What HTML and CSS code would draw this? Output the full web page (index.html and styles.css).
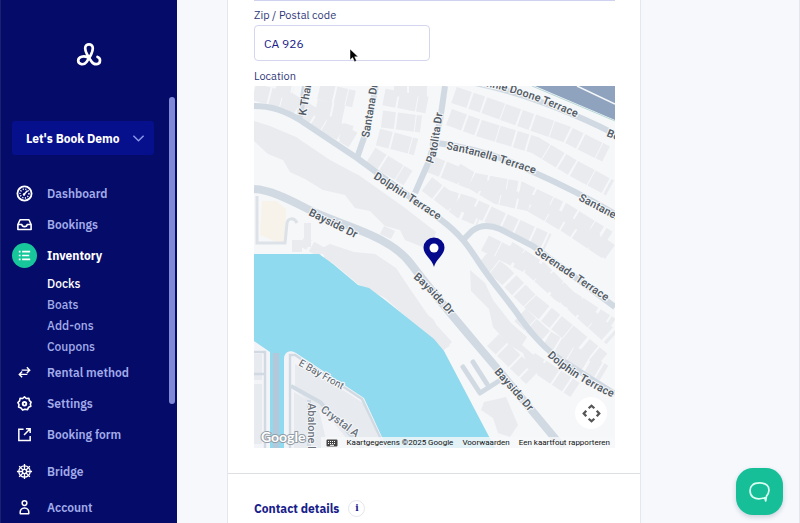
FILE: index.html
```html
<!DOCTYPE html>
<html lang="en">
<head>
<meta charset="utf-8">
<meta name="viewport" content="width=device-width, initial-scale=1">
<title>Let's Book – Docks</title>
<link rel="stylesheet" href="styles.css">
</head>
<body>
<div class="app">
  <aside class="sidebar">
    <svg class="logo" viewBox="0 0 26 26" fill="none" stroke="#fff" stroke-width="2.700" stroke-linecap="round" aria-hidden="true"><path d="M11.500 15.300C8 13.500 2.200 14.500 2.200 18.600 2.200 22.800 8 23.500 10.500 20 13 16.500 16.800 10 16.800 6.200 16.800 1 9.200 1 9.200 6.200 9.200 10 13 16 15.500 19.500 18 23.500 24 23 24 18.500 24 16.500 23 15.500 21.500 15"/></svg>
    <button class="account-switch" type="button"><span>Let's Book Demo</span>
      <svg viewBox="0 0 14 9" fill="none" stroke="#8c97e6" stroke-width="1.600"><path d="M1.500 1.500 7 7l5.500-5.500"/></svg></button>
    <nav class="nav">
      <a class="item" href="#"><span class="icon"><svg viewBox="0 0 18 18" fill="none" stroke="#fff"><circle cx="9" cy="9" r="7.500" stroke-width="1.900"/><circle cx="9" cy="9" r="4.700" stroke-width="1.600" stroke-dasharray="1.200 1.600"/><path d="m8 10.500 4-4.500" stroke-width="1.600"/><circle cx="8.500" cy="10" r="1.300" fill="#fff" stroke="none"/></svg></span>Dashboard</a>
      <a class="item" href="#"><span class="icon"><svg viewBox="0 0 18 18" fill="none" stroke="#fff" stroke-width="1.700" stroke-linejoin="round"><path d="M2 9 4.300 4h9.400l2.300 5v5.300H2zM2 9h4.200c.2 3 5.400 3 5.600 0H16"/></svg></span>Bookings</a>
      <a class="item current" href="#"><span class="icon active"><svg viewBox="0 0 18 18" fill="none" stroke="#fff" stroke-width="1.800"><path d="M6.500 5H15M6.500 9H14M6.500 13H15M3 5h1.800M3 9h1.800M3 13h1.800"/></svg></span>Inventory</a>
      <div class="sub">
        <a class="current" href="#">Docks</a>
        <a href="#">Boats</a>
        <a href="#">Add-ons</a>
        <a href="#">Coupons</a>
      </div>
      <a class="item" href="#"><span class="icon"><svg viewBox="0 0 18 18" fill="none" stroke="#fff" stroke-width="1.500"><path d="M6 6.500h8M11.500 3.500l3 3-3 3M12 11H4M6.500 8l-3 3 3 3"/></svg></span>Rental method</a>
      <a class="item" href="#"><span class="icon"><svg viewBox="0 0 18 18" fill="none" stroke="#fff"><path stroke-width="1.700" stroke-linejoin="round" d="M9 2l1.900 1.700 2.700-.3.600 2.600L16 7.500 15.200 9.500l.5 2.500-2.300.9L12.200 15.500 9.500 15 7 16 5.300 13.800 2.700 12.800 3.200 10.200 2 8 3.800 6.200 4.300 3.600 7 3.700z"/><circle cx="9" cy="9.300" r="1.900" stroke-width="2"/></svg></span>Settings</a>
      <a class="item" href="#"><span class="icon"><svg viewBox="0 0 18 18" fill="none" stroke="#fff" stroke-width="1.600"><path d="M8 3.500H3v11.800h12V10.500M10.500 3H15v4.500M15 3l-6.500 6.500"/></svg></span>Booking form</a>
      <a class="item tall first" href="#"><span class="icon"><svg viewBox="0 0 18 18" fill="none" stroke="#fff" stroke-width="1.400"><circle cx="9" cy="9" r="6"/><circle cx="9" cy="9" r="2.200"/><path d="M9 1v5.800M9 11.200V17M1 9h5.800M11.200 9H17M3.300 3.300l4.100 4.100M10.600 10.600l4.100 4.100M14.700 3.300l-4.100 4.100M7.400 10.600l-4.100 4.100"/></svg></span>Bridge</a>
      <a class="item tall" href="#"><span class="icon"><svg viewBox="0 0 18 18" fill="none" stroke="#fff" stroke-width="1.600"><circle cx="9" cy="4.300" r="2.500"/><path stroke-linejoin="round" d="M4.500 15.500c-.5-4 1.500-6 4.500-6s5 2 4.500 6z"/></svg></span>Account</a>
    </nav>
    <span class="scroll-thumb"></span>
  </aside>

  <main class="main">
    <section class="card">
      <form class="fields">
        <div class="field-edge"></div>
        <label for="zip">Zip / Postal code</label>
        <input id="zip" type="text" value="CA 926">
        <span class="label">Location</span>
        <div class="map">
          <svg class="map-art" viewBox="254 86 361 362" role="img" aria-label="Location map">
            <rect x="254" y="86" width="361" height="362" fill="#f6f7f9"/>
            <g fill="#e9ebef">
              <path d="M254 121 270 126 296 137 330 160 360 176 405 208 436 232 430 250 405 240 400 230 385 226 370 211 355 208 345 195 323 190 305 179 290 172 283 160 268 154 254 141z"/>
              <path d="M318 250 330 244 354 252 375 254 396 268 410 289 430 318 452 342 444 350 433 341 385 298 358 284 334 264z"/>
              <path d="M384 226l11 5-4 8-11-5zM470 270l15 13 8 17 18 23 16 14-5 8 14 12 12 9-8 9-12-7-5-15-14-8-16-18-4-18-18-18z"/>
              <path d="M296 362 365 403 382 448H292V362zM254 352h12v95h-12z"/>
              <path d="M292 240h10v12h-10zM304 223h7v24h-7zM484 402l22-5 12 28-8 12-12-4-5-15-12-8z"/>
            </g>
            <g fill="none" stroke="#e9ebef" stroke-width="17">
              <path stroke-dasharray="15 2 11 1 18 3" d="M254 92 289 101 320 120 353 140M276 88 293 91M319 91 354 99M316 108 344 114M325 126 351 134"/>
              <path stroke-dasharray="13 2 18 1 10 3" d="M384 97 427 105M382 119 421 124M378 137 416 147M371 155 408 178M394 88h34M427 184 461 210 480 218M430 164 472 181 520 190 563 211 608 239"/>
              <path stroke-dasharray="16 2 12 2 19 1" d="M454 95 484 105 520 118 566 134 606 154M449 117 482 129 535 145 573 168 610 188M456 171 498 196 530 203 566 224 608 252"/>
              <path stroke-dasharray="14 1 18 3 11 2" d="M485 243 530 266 560 293 611 326M483 258 503 274 531 302 557 323 602 360M508 249 540 270 573 303 612 338M520 315 545 338 604 373"/>
              <path stroke-dasharray="12 2 16 2" d="M445 198 469 205 500 220 548 242M586 235 610 252M530 360 575 390M493 340 532 378"/>
              <path stroke-width="11" stroke-dasharray="8 3 12 4" d="M302 241 330 257 366 269 400 299 429 323 445 349M292 377 320 394 360 424"/>
            </g>
            <path fill="#f8f3ea" d="M262 201h14l10 8-1 33-11-1-14-6z"/>
            <path fill="none" stroke="#dce2e8" stroke-width="3" d="M257 196v47h28l2-20c1-5 7-6 10 0"/>
            <path fill="#8fdaee" d="M254 254h65l14 10 25 21 11 3 16 12 49 39 10 12 51 97H254z"/>
            <path fill="#f3f4f7" d="M254 341l16 11v96h-16zM284 448v-89c0-7 6-10 12-6l68 45 23 50z"/>
            <path fill="#e7eaef" d="M254 354h8v26h-8zM254 384h8v60h-8zM295 364l43 23 25 16 20 45h-29l-23-29-36-29zM294 392l24 14 10 42h-34z"/>
            <g fill="none" stroke="#d1dae2">
              <path stroke-width="6" stroke="#b5c8da" d="M276 353v95"/>
              <path stroke-width="2.500" d="M290 448v-93h5l67 44 23 49M254 352h11v96M254 374h10"/>
              <path stroke-width="4" d="M291 386 320 402 363 448M309 400v48"/>
              <path stroke-width="6" stroke-linejoin="round" d="M254 106c18 0 31 5 46 14l57 38 83 61c20 15 27 25 40 45 12 18 28 36 41 55 11 15 25 31 39 40l55 35"/>
              <path stroke-width="6" d="M305 86l-6 34M376 86l-9 43-10 29M445 86l-5 35-11 40-14 32M430 142c35 4 71 14 101 29 27 12 54 25 84 43M464 239l8-8c9-7 18-6 28-2l33 17 82 61M470 82c42 8 89 24 145 52"/>
              <path stroke-width="8" d="M254 189c20 1 43 15 62 24 34 15 75 24 95 51 28 37 57 70 84 102l68 82"/>
              <path stroke-width="5" stroke-linejoin="round" stroke-linecap="round" d="M463 367l17 26 22-14M473 362l14 22"/>
            </g>
            <path fill="#8fa3bf" d="M535 86h80v34z"/>
            <path fill="none" stroke="#f6f8fa" stroke-width="1.500" d="M577 86l38 18"/>
            <path fill="none" stroke="#b7d9d7" d="M532 86l83 35"/>
            <defs>
              <path id="khana" d="M306 116 316 56"/><path id="santana" d="M369 138 380 72"/>
              <path id="patolita" d="M433 164C440 146 439 125 446 98"/>
              <path id="bonnie" d="M480 85C516 92 550 105 599 128"/>
              <path id="bonnie2" d="M606 136l40 16"/>
              <path id="santanella" d="M446 149C478 155 513 166 560 183"/>
              <path id="santanella2" d="M578 200 658 242"/>
              <path id="dolphin" d="M373 178 458 233"/>
              <path id="bayside" d="M308 215 385 253"/>
              <path id="bayside2" d="M413 278C427 289 440 306 467 333"/>
              <path id="serenade" d="M534 253 635 321"/>
              <path id="dolphin2" d="M547 356C564 372 588 388 632 406"/>
              <path id="bayside3" d="M494 372 545 430"/>
              <path id="ebay" d="M298 365 360 400"/>
              <path id="crystal" d="M320 411 383 458"/>
              <path id="abalone" d="M308 403v80"/>
            </defs>
            <g class="streets">
              <text><textPath href="#khana">K Thanga</textPath></text><text><textPath href="#santana">Santana Dr</textPath></text>
              <text><textPath href="#patolita">Patolita Dr</textPath></text><text><textPath href="#bonnie">onnie Doone Terrace</textPath></text>
              <text><textPath href="#bonnie2">Bo</textPath></text><text><textPath href="#santanella">Santanella Terrace</textPath></text>
              <text><textPath href="#santanella2">Santane.</textPath></text><text><textPath href="#dolphin">Dolphin Terrace</textPath></text>
              <text><textPath href="#bayside">Bayside Dr</textPath></text><text><textPath href="#bayside2">Bayside Dr</textPath></text>
              <text><textPath href="#serenade">Serenade Terrace</textPath></text><text><textPath href="#dolphin2">Dolphin Terrace</textPath></text>
              <text><textPath href="#bayside3">Bayside Dr</textPath></text><text class="minor"><textPath href="#ebay">E Bay Front</textPath></text>
              <text class="side"><textPath href="#crystal">Crystal A</textPath></text><text class="side"><textPath href="#abalone">Abalone D</textPath></text>
            </g>
            <path fill="#050a8c" d="M434 267c-2-8-10.500-12-10.500-19.500a10.500 10 0 0 1 21 0C444.500 255 436 259 434 267z"/>
            <circle cx="434" cy="248" r="4.500" fill="#fff"/>
            <text class="brand" x="261" y="442">Google</text>
          </svg>
          <button class="map-move" type="button" aria-label="Move map"><svg viewBox="0 0 20 20" fill="none" stroke="#555" stroke-width="2.400"><path d="M7 4.500 10 1.800l3 2.700M7 15.500l3 2.700 3-2.700M4.500 7 1.800 10l2.700 3M15.500 7l2.700 3-2.700 3"/></svg></button>
          <div class="map-legal">
            <svg class="keys" viewBox="0 0 12 8"><rect x=".5" y=".5" width="11" height="7" rx="1" fill="#444"/><path stroke="#fff" stroke-dasharray="1 1" d="M2 2.500h8M2 4.500h8"/><path stroke="#fff" d="M4 6.300h4"/></svg>
            <span>Kaartgegevens ©2025 Google</span><a href="#">Voorwaarden</a><a href="#">Een kaartfout rapporteren</a>
          </div>
        </div>
      </form>
      <div class="contact"><h2>Contact details</h2><button class="info" type="button">i</button></div>
    </section>
  </main>

  <button class="chat" type="button" aria-label="Open chat"><svg viewBox="0 0 24 24" fill="none" stroke="#d8fff1" stroke-width="1.800" stroke-linejoin="round"><path d="M17.500 18.500C13 20 8 19.800 5 17.800 1.300 15 1.300 8 4.500 5.300c3.300-3 12.200-3 15.300 0 3 2.800 2.600 8.500-.5 11.500l-.8 5z"/></svg></button>
  <svg class="pointer" viewBox="0 0 10 15"><path d="M1 1v11l2.600-2.400 1.900 4.100 2-1-1.800-3.900h3.500z" fill="#050505" stroke="#fff" stroke-width=".5"/></svg>
</div>
</body>
</html>
```
FILE: styles.css
```css
* { box-sizing: border-box; }
body {
  margin: 0;
  font-family: "IBM Plex Sans", "Noto Sans", sans-serif;
  font-size: 12px;
  color: #17208a;
}
button, input { font: inherit; }
a { color: inherit; text-decoration: none; }
.app {
  position: relative;
  display: flex;
  height: 100vh;
  overflow: hidden;
  background: #f6f8fc;
}

/* Sidebar */
.sidebar {
  position: relative;
  flex: 0 0 177px;
  display: flex;
  flex-direction: column;
  padding: 42px 11px 0;
  background: #050b68;
  border-left: 1px solid #18226f;
}
.logo {
  width: 26px;
  height: 26px;
  flex-shrink: 0;
  margin-left: 64px;
}
.account-switch {
  display: flex;
  flex-shrink: 0;
  align-items: center;
  justify-content: space-between;
  height: 34px;
  margin: 53px 12px 23px 0;
  padding: 0 9px 0 14px;
  border: 0;
  border-radius: 3px;
  background: #06108d;
  color: #fff;
  font-weight: 700;
}
.account-switch svg { width: 13px; height: 9px; }
.nav { color: #a2abea; font-weight: 600; }
.item {
  display: flex;
  align-items: center;
  gap: 10px;
  height: 31px;
}
.item.tall { height: 36px; }
.item.first { margin-top: 3px; }
.icon {
  display: grid;
  place-items: center;
  width: 25px;
  height: 25px;
}
.icon svg { width: 17px; height: 17px; }
.icon.active { border-radius: 50%; background: #17c79b; }
.current { color: #fff; }
.item.current { font-weight: 700; }
.sub {
  display: grid;
  margin-top: 2px;
  padding-left: 35px;
  font-weight: 500;
  line-height: 21px;
}
.scroll-thumb {
  position: absolute;
  top: 97px;
  right: 2px;
  width: 6px;
  height: 307px;
  border-radius: 3px;
  background: #7f89d6;
}

/* Form */
.main {
  flex: 1;
  min-width: 0;
  padding: 0 158px 0 50px;
  border-right: 1px solid #e3e6ee;
}
.card {
  min-height: 100vh;
  background: #fff;
  border: solid #e4e6f1;
  border-width: 0 1px;
}
.fields {
  display: flex;
  flex-direction: column;
  align-items: flex-start;
  padding: 0 25px 25px 26px;
  border-bottom: 1px solid #dedfe5;
}
.field-edge { width: 100%; height: 1px; background: #cfd2ee; }
label, .label {
  font-size: 11px;
  line-height: 16px;
  color: #303778;
}
label { margin: 6px 0 2px; }
.label { margin: 7px 0 2px; }
#zip {
  width: 176px;
  height: 36px;
  padding: 0 9px;
  border: 1px solid #d3d6ee;
  border-radius: 4px;
  background: #fff;
  color: #17208a;
}
.contact {
  display: flex;
  align-items: center;
  gap: 9px;
  padding: 26px;
}
h2 { margin: 0; font-size: 12px; line-height: 17px; font-weight: 700; }
.info {
  width: 17px;
  height: 17px;
  padding: 0;
  border: 1px solid #e5e6ee;
  border-radius: 50%;
  background: #fff;
  color: #17208a;
  font: bold 9px/15px "DejaVu Serif", serif;
}

/* Map */
.map {
  position: relative;
  width: 100%;
  overflow: hidden;
  font-family: Roboto, sans-serif;
}
.map-art { display: block; width: 100%; }
.streets {
  font-size: 11px;
  font-weight: 600;
  fill: #555e68;
  stroke: #f7f8fa;
  stroke-width: 2px;
  paint-order: stroke;
}
.streets .minor { font-size: 10px; font-weight: 400; }
.streets .side { font-weight: 500; fill: #6c747e; }
.brand {
  font-family: Lato, sans-serif;
  font-size: 14px;
  font-weight: 700;
  fill: #fff;
  stroke: #939ca5;
  stroke-width: 2px;
  paint-order: stroke;
}
.map-move {
  position: absolute;
  right: 8px;
  bottom: 19px;
  display: grid;
  place-items: center;
  width: 32px;
  height: 32px;
  padding: 0;
  border: 0;
  border-radius: 50%;
  background: #fff;
}
.map-move svg { width: 19px; height: 19px; }
.map-legal {
  position: absolute;
  right: 0;
  bottom: 0;
  display: flex;
  align-items: center;
  gap: 9px;
  height: 11px;
  padding: 0 5px;
  background: rgba(246, 247, 249, 0.8);
  color: #111;
  font-size: 8px;
  line-height: 11px;
  white-space: nowrap;
}
.keys { width: 12px; height: 8px; }

/* Floating items */
.chat {
  position: absolute;
  right: 17px;
  bottom: 8px;
  display: grid;
  place-items: center;
  width: 47px;
  height: 47px;
  padding: 0;
  border: 0;
  border-radius: 17px;
  background: #17bf98;
  box-shadow: 0 2px 5px rgba(20, 50, 80, 0.2);
}
.chat svg { width: 23px; height: 23px; }
.pointer {
  position: absolute;
  left: 349px;
  top: 48px;
  width: 10px;
  height: 15px;
}
```
